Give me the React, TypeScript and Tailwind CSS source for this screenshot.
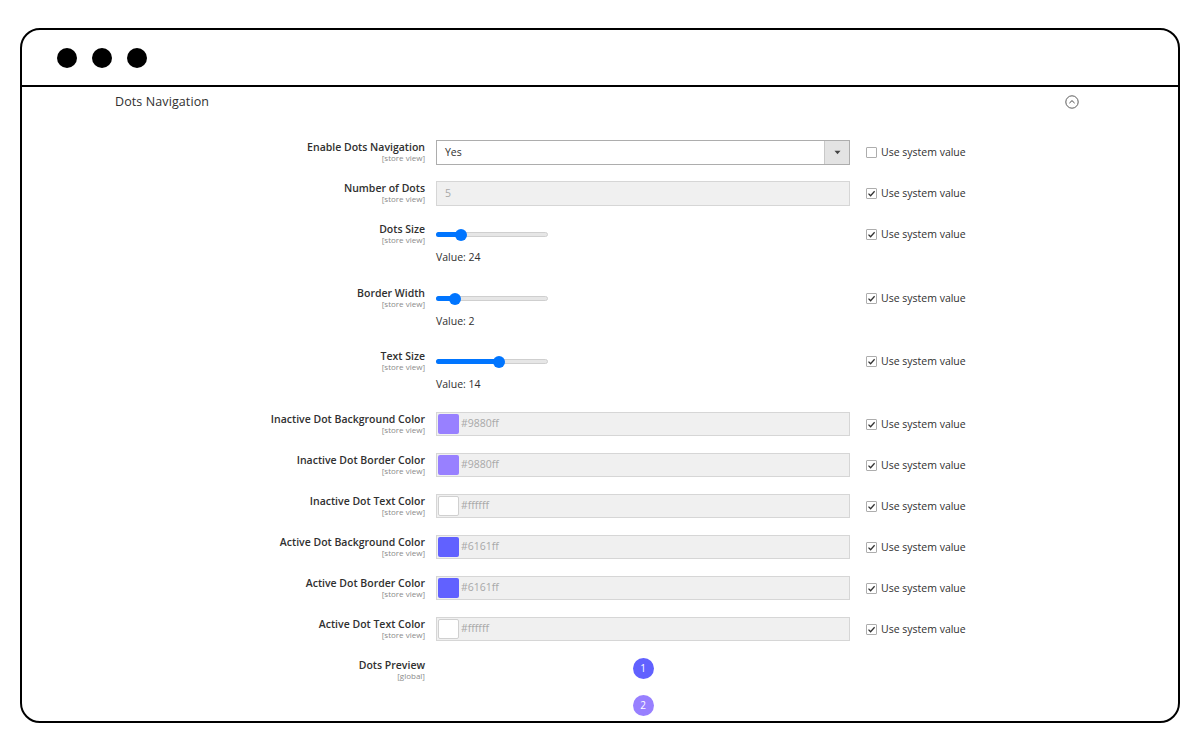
import React from "react";

const font = { fontFamily: '"Open Sans", "Noto Sans", sans-serif' };

function Label({ title, scope = "[store view]" }: { title: string; scope?: string }) {
  return (
    <div className="w-[403px] shrink-0 text-right pr-0">
      <div className="text-[10.5px] leading-[14px] font-semibold text-[#303030]">{title}</div>
      <div className="text-[8px] leading-[10px] text-[#8a8a8a] mt-[-1px]">{scope}</div>
    </div>
  );
}

function SysCheck({ checked = true }: { checked?: boolean }) {
  return (
    <div className="flex items-center ml-[16px] h-[25px]">
      <div className="w-[11px] h-[11px] border border-[#adadad] rounded-[1px] bg-white flex items-center justify-center">
        {checked && (
          <svg width="9" height="9" viewBox="0 0 9 9">
            <path d="M1.5 4.6 L3.6 6.7 L7.6 2.2" fill="none" stroke="#333" strokeWidth="1.3" />
          </svg>
        )}
      </div>
      <span className="ml-[4px] text-[10.5px] text-[#303030]">Use system value</span>
    </div>
  );
}

function InputRow({ title, children, checked = true }: { title: string; children: React.ReactNode; checked?: boolean }) {
  return (
    <div className="flex h-[41px] items-start">
      <Label title={title} />
      <div className="ml-[11px] w-[414px] shrink-0">{children}</div>
      <SysCheck checked={checked} />
    </div>
  );
}

function SliderRow({ title, pct, value, h }: { title: string; pct: number; value: number; h: string }) {
  return (
    <div className={`flex items-start ${h}`}>
      <Label title={title} />
      <div className="ml-[11px] w-[414px] shrink-0">
        <div className="h-[25px] flex items-center">
          <div className="relative w-[112px] h-[5px] rounded-full bg-[#e6e6e6] border border-[#cfcfcf]">
            <div className="absolute left-[-1px] top-[-1px] h-[5px] rounded-full bg-[#0075ff]" style={{ width: `${pct}%` }} />
            <div
              className="absolute top-1/2 w-[12px] h-[12px] -mt-[6px] -ml-[6px] rounded-full bg-[#0075ff]"
              style={{ left: `${pct}%` }}
            />
          </div>
        </div>
        <div className="text-[10.5px] text-[#303030] leading-[14px] mt-[3px]">Value: {value}</div>
      </div>
      <SysCheck />
    </div>
  );
}

function ColorInput({ color, white = false }: { color: string; white?: boolean }) {
  return (
    <div className="h-[24px] bg-[#f0f0f0] border border-[#d6d6d6] flex items-center pl-[1px]">
      <div
        className={`w-[21px] h-[20px] rounded-[2px] ${white ? "bg-white border border-[#d0d0d0]" : ""}`}
        style={white ? undefined : { backgroundColor: color }}
      />
      <span className="ml-[2px] text-[10.5px] text-[#a8a8a8]">{color}</span>
    </div>
  );
}

export default function App() {
  return (
    <div className="w-[1200px] h-[750px] bg-white relative" style={font}>
      <div className="absolute left-[20px] top-[28px] w-[1160px] h-[695px] border-2 border-black rounded-[20px] overflow-hidden bg-white flex flex-col">
        <div className="h-[57px] shrink-0 border-b-2 border-black flex items-center pl-[35px] gap-[15px]">
          <div className="w-[20px] h-[20px] rounded-full bg-black" />
          <div className="w-[20px] h-[20px] rounded-full bg-black" />
          <div className="w-[20px] h-[20px] rounded-full bg-black" />
        </div>
        <div className="flex-1 overflow-hidden">
          <div className="flex items-center h-[30px] pl-[93px] pr-[99px]">
            <div className="text-[12.5px] font-medium text-[#303030] tracking-[0.1px]">Dots Navigation</div>
            <div className="ml-auto">
              <svg width="14" height="14" viewBox="0 0 14 14">
                <circle cx="7" cy="7" r="6.2" fill="none" stroke="#4a4a4a" strokeWidth="0.9" />
                <path d="M4.4 8.1 L7 5.6 L9.6 8.1" fill="none" stroke="#4a4a4a" strokeWidth="1" />
              </svg>
            </div>
          </div>
          <div className="flex flex-col mt-[23px]">
            <InputRow title="Enable Dots Navigation" checked={false}>
              <div className="h-[25px] bg-white border border-[#adadad] flex items-center">
                <span className="ml-[8px] text-[10.5px] text-[#303030]">Yes</span>
                <div className="ml-auto h-full w-[25px] bg-[#e3e3e3] border-l border-[#c8c8c8] flex items-center justify-center">
                  <svg width="7" height="5" viewBox="0 0 7 5">
                    <path d="M0.5 0.8 H6.5 L3.5 4.2 Z" fill="#444" />
                  </svg>
                </div>
              </div>
            </InputRow>
            <InputRow title="Number of Dots">
              <div className="h-[25px] bg-[#f0f0f0] border border-[#d6d6d6] flex items-center">
                <span className="ml-[8px] text-[10.5px] text-[#a8a8a8]">5</span>
              </div>
            </InputRow>
            <SliderRow title="Dots Size" pct={21.5} value={24} h="h-[64px]" />
            <SliderRow title="Border Width" pct={16} value={2} h="h-[63px]" />
            <SliderRow title="Text Size" pct={56} value={14} h="h-[63px]" />
            <InputRow title="Inactive Dot Background Color">
              <ColorInput color="#9880ff" />
            </InputRow>
            <InputRow title="Inactive Dot Border Color">
              <ColorInput color="#9880ff" />
            </InputRow>
            <InputRow title="Inactive Dot Text Color">
              <ColorInput color="#ffffff" white />
            </InputRow>
            <InputRow title="Active Dot Background Color">
              <ColorInput color="#6161ff" />
            </InputRow>
            <InputRow title="Active Dot Border Color">
              <ColorInput color="#6161ff" />
            </InputRow>
            <InputRow title="Active Dot Text Color">
              <ColorInput color="#ffffff" white />
            </InputRow>
            <div className="flex items-start">
              <Label title="Dots Preview" scope="[global]" />
              <div className="ml-[11px] w-[414px] shrink-0 flex flex-col items-center gap-[16px]">
                <div className="w-[21px] h-[21px] rounded-full bg-[#6161ff] text-white text-[10px] flex items-center justify-center">1</div>
                <div className="w-[21px] h-[21px] rounded-full bg-[#9880ff] text-white text-[10px] flex items-center justify-center">2</div>
              </div>
            </div>
          </div>
        </div>
      </div>
    </div>
  );
}
